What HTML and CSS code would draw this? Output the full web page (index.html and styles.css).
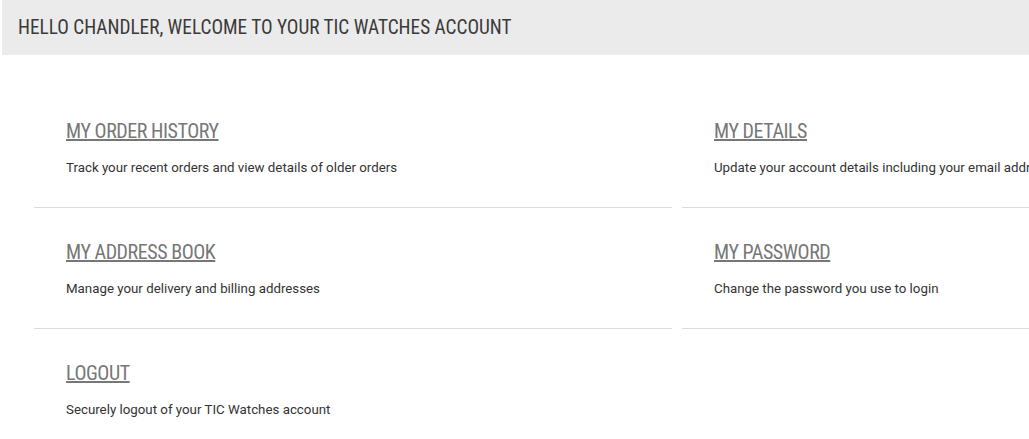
FILE: index.html
```html
<!DOCTYPE html>
<html>
<head>
<meta charset="utf-8">
<link rel="stylesheet" href="styles.css">
</head>
<body>
<div class="page">
  <header class="welcome">
    <h1 class="welcome-title">HELLO CHANDLER, WELCOME TO YOUR TIC WATCHES ACCOUNT</h1>
  </header>
  <div class="grid">
    <div class="card">
      <a class="card-title" href="#">MY ORDER HISTORY</a>
      <p class="card-text">Track your recent orders and view details of older orders</p>
    </div>
    <div class="card">
      <a class="card-title" href="#">MY DETAILS</a>
      <p class="card-text">Update your account details including your email address</p>
    </div>
    <div class="card">
      <a class="card-title" href="#">MY ADDRESS BOOK</a>
      <p class="card-text">Manage your delivery and billing addresses</p>
    </div>
    <div class="card">
      <a class="card-title" href="#">MY PASSWORD</a>
      <p class="card-text">Change the password you use to login</p>
    </div>
    <div class="card card-last">
      <a class="card-title" href="#">LOGOUT</a>
      <p class="card-text">Securely logout of your TIC Watches account</p>
    </div>
  </div>
</div>
</body>
</html>
```
FILE: styles.css
```css
html, body {
  margin: 0;
  padding: 0;
  background: #fff;
  overflow: hidden;
}
.page {
  width: 1400px;
  padding-left: 2px;
  font-family: Roboto, "Liberation Sans", sans-serif;
}
.welcome {
  background: #ebebeb;
  height: 55px;
  padding-left: 16px;
  display: flex;
  align-items: center;
}
.welcome-title {
  margin: 0;
  font-family: "Roboto Condensed", "Liberation Sans Narrow", Roboto, sans-serif;
  font-stretch: condensed;
  font-weight: 400;
  font-size: 19.3px;
  line-height: 24px;
  color: #3a3a3a;
  padding-top: 1px;
  padding-bottom: 1px;
}
.grid {
  display: grid;
  grid-template-columns: 638px 638px;
  column-gap: 10px;
  margin-left: 32px;
  margin-top: 32px;
}
.card {
  display: flex;
  flex-direction: column;
  align-items: flex-start;
  height: 120px;
  padding-left: 32px;
  border-bottom: 1px solid #dddddd;
}
.card-last {
  border-bottom: none;
}
.card-title {
  margin-top: 32px;
  font-family: "Roboto Condensed", "Liberation Sans Narrow", Roboto, sans-serif;
  font-stretch: condensed;
  font-weight: 400;
  font-size: 20px;
  line-height: 24px;
  letter-spacing: -0.45px;
  color: #777777;
  text-decoration: underline;
}
.card-text {
  margin: 16px 0 0;
  font-size: 13.3px;
  line-height: 18px;
  color: #333333;
}
```
